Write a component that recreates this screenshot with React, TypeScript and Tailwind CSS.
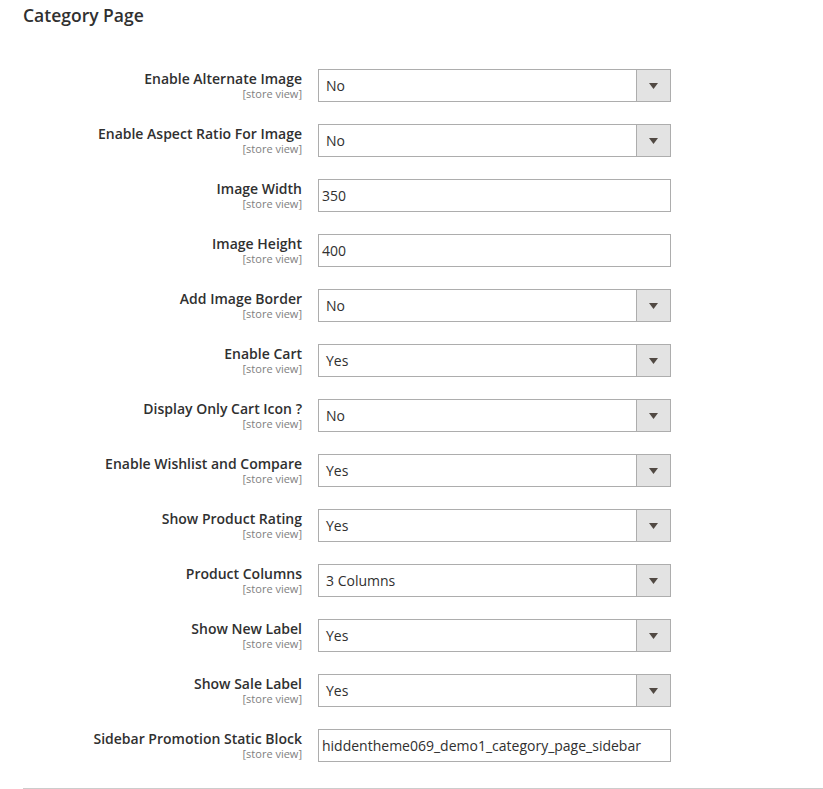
import React from 'react';

type Field = {
  label: string;
  kind: 'select' | 'text';
  value: string;
};

const fields: Field[] = [
  { label: 'Enable Alternate Image', kind: 'select', value: 'No' },
  { label: 'Enable Aspect Ratio For Image', kind: 'select', value: 'No' },
  { label: 'Image Width', kind: 'text', value: '350' },
  { label: 'Image Height', kind: 'text', value: '400' },
  { label: 'Add Image Border', kind: 'select', value: 'No' },
  { label: 'Enable Cart', kind: 'select', value: 'Yes' },
  { label: 'Display Only Cart Icon ?', kind: 'select', value: 'No' },
  { label: 'Enable Wishlist and Compare', kind: 'select', value: 'Yes' },
  { label: 'Show Product Rating', kind: 'select', value: 'Yes' },
  { label: 'Product Columns', kind: 'select', value: '3 Columns' },
  { label: 'Show New Label', kind: 'select', value: 'Yes' },
  { label: 'Show Sale Label', kind: 'select', value: 'Yes' },
  { label: 'Sidebar Promotion Static Block', kind: 'text', value: 'hiddentheme069_demo1_category_page_sidebar' },
];

const Row: React.FC<{ field: Field }> = ({ field }) => (
  <div className="flex items-start gap-4">
    <div className="w-[279px] pt-px text-right">
      <div className="text-[14px] leading-[17px] font-semibold text-[#303030]">{field.label}</div>
      <div className="text-[11px] leading-[13px] text-[#808080]">[store view]</div>
    </div>
    {field.kind === 'select' ? (
      <div className="flex h-[33px] w-[353px] border border-[#adadad] bg-white">
        <div className="flex flex-1 items-center pl-[7px] text-[14px] text-[#303030]">{field.value}</div>
        <div className="flex w-[34px] items-center justify-center border-l border-[#adadad] bg-[#e3e3e3]">
          <svg width="9" height="6" viewBox="0 0 9 6">
            <path d="M0 0H9L4.5 6Z" fill="#514943" />
          </svg>
        </div>
      </div>
    ) : (
      <div className="flex h-[33px] w-[353px] items-center border border-[#adadad] bg-white pl-[3px] text-[14px] text-[#303030]">
        {field.value}
      </div>
    )}
  </div>
);

const App: React.FC = () => {
  return (
    <div
      className="min-h-screen bg-white pl-[23px] pt-[5px]"
      style={{ fontFamily: '"Open Sans", "Noto Sans", sans-serif' }}
    >
      <h1 className="text-[17.5px] leading-[21px] font-semibold text-[#303030]">Category Page</h1>
      <div className="mt-[43px] flex flex-col gap-[22px]">
        {fields.map((field) => (
          <Row key={field.label} field={field} />
        ))}
      </div>
      <div className="mt-[26px] border-t border-[#cccccc]" />
    </div>
  );
};

export default App;
